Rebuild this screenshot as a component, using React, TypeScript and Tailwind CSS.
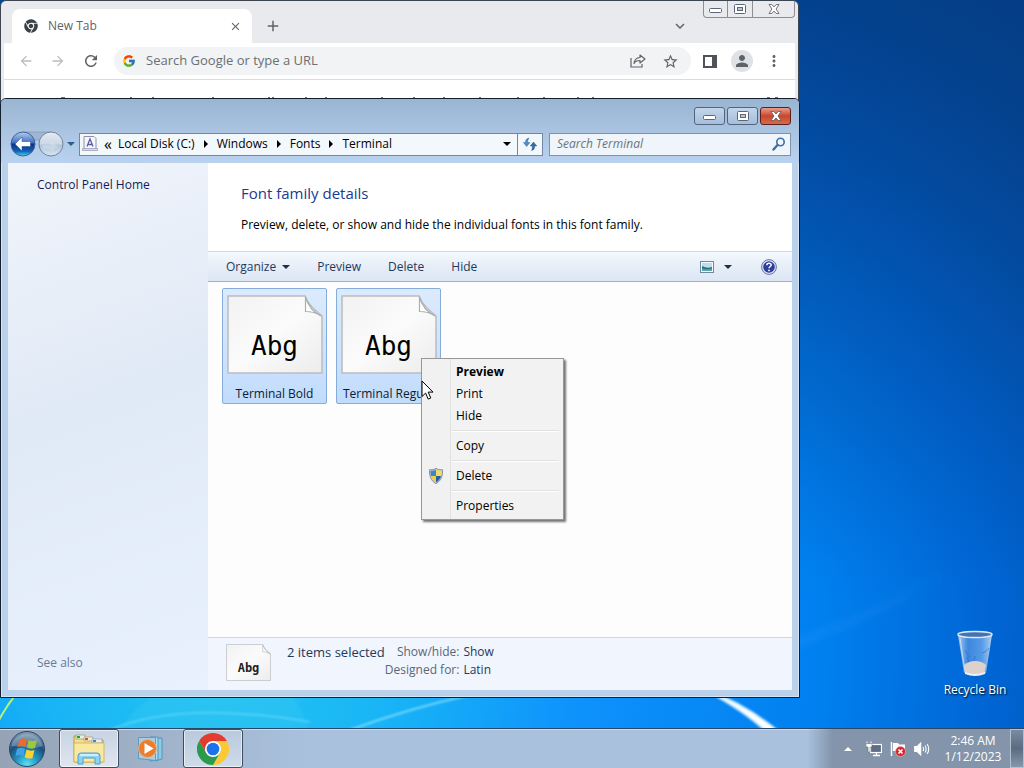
import type { ReactNode } from "react";
import { FaChrome } from "react-icons/fa";
import { FcGoogle } from "react-icons/fc";
import { MdAdd, MdArrowBack, MdArrowForward, MdClose, MdKeyboardArrowDown, MdMoreVert, MdPerson, MdRefresh, MdStarBorder } from "react-icons/md";

function MinimizeGlyph() {
  return (
    <svg width="13" height="6" viewBox="0 0 13 6">
      <rect x="0.5" y="0.5" width="12" height="4" rx="1" fill="#fff" stroke="#5c6678" />
    </svg>
  );
}

function MaximizeGlyph() {
  return (
    <svg width="12" height="10" viewBox="0 0 12 10">
      <rect x="0.5" y="0.5" width="11" height="9" rx="1" fill="#fff" stroke="#5c6678" />
      <rect x="3.5" y="3.5" width="5" height="3" fill="#b8c8dc" stroke="#5c6678" />
    </svg>
  );
}

function CloseGlyph() {
  return (
    <svg width="12" height="10" viewBox="0 0 13 11">
      <path d="M1 .5h3l2.500 2.700L9 .5h3L8.800 5.500 12 10.500H9L6.500 7.800 4 10.500H1l3.200-5z" fill="#fff" stroke="#5a5560" strokeWidth=".9" />
    </svg>
  );
}

function DownTriangle({ fill = "#1e2f45" }: { fill?: string }) {
  return (
    <svg width="8" height="4" viewBox="0 0 8 4">
      <path d="M0 0h8L4 4z" fill={fill} />
    </svg>
  );
}

function RightTriangle() {
  return (
    <svg width="4" height="8" viewBox="0 0 4 8">
      <path d="M0 0v8l4-4z" fill="#000" />
    </svg>
  );
}

function ShareIcon() {
  return (
    <svg width="16" height="14" viewBox="0 0 16 14" fill="none" stroke="#5f6368" strokeWidth="1.2">
      <path d="M1 4v9h11v-3" />
      <path d="M10 1l5 4-5 4V6.500C7 6.500 5 7.500 4 9.500c.3-3.500 2.500-5.700 6-6z" strokeLinejoin="round" />
    </svg>
  );
}

function NavArrows() {
  return (
    <svg width="56" height="28" viewBox="0 0 56 28">
      <defs>
        <linearGradient id="orb" x1="0" y1="0" x2="0" y2="1">
          <stop offset="0" stopColor="#b4cdf0" />
          <stop offset=".45" stopColor="#3e70c4" />
          <stop offset=".5" stopColor="#0c3187" />
          <stop offset=".8" stopColor="#0c64b8" />
          <stop offset="1" stopColor="#4fd3f5" />
        </linearGradient>
        <linearGradient id="dim" x1="0" y1="0" x2="0" y2="1">
          <stop offset="0" stopColor="#e4ebf3" />
          <stop offset=".5" stopColor="#ccd8e6" />
          <stop offset=".55" stopColor="#b1c4da" />
          <stop offset="1" stopColor="#d8e6f4" />
        </linearGradient>
      </defs>
      <path d="M14 2h28v8H14z" fill="#9db6d3" stroke="#8098b6" strokeWidth=".7" />
      <circle cx="14" cy="14" r="12" fill="url(#orb)" stroke="#44618c" />
      <circle cx="42" cy="14" r="12" fill="url(#dim)" stroke="#72849c" />
      <path d="M6 14l7-7v4.500h8.500v5H13V21z" fill="#fff" stroke="#21498c" strokeWidth=".5" />
      <path d="M34 15h8v-3l7 4.500-7 4v-2h-8z" fill="#e2eaf2" opacity=".4" />
    </svg>
  );
}

function FontFolderIcon() {
  return (
    <svg width="16" height="16" viewBox="0 0 16 16">
      <path d="M2 .5h10l2 2v11H2z" fill="#f6f6fb" stroke="#8d90a8" />
      <path d="M.5 12.500h15v2H.5z" fill="#d9dce8" stroke="#9497ae" strokeWidth=".7" />
      <path d="M5 10.500L8 3l3 7.500M6 8.500h4" fill="none" stroke="#5560a8" strokeWidth="1.300" />
    </svg>
  );
}

function RefreshIcon() {
  return (
    <svg width="14" height="14" viewBox="0 0 14 14">
      <path d="M6 1C3 1.500 2.500 3.500 2.500 5.500H.3L3.700 9.500 7 5.500H4.700C4.700 4 5 2.500 6 1z" fill="#4a90cc" stroke="#2c5f95" strokeWidth=".4" />
      <path d="M8.500 13.500c3-.5 3.200-2.500 3.200-4.500h2.100L10.500 5 7.200 9h2.100c0 1.700 0 3-.8 4.500z" fill="#2f6ea8" stroke="#244f7e" strokeWidth=".4" />
    </svg>
  );
}

function SearchIcon() {
  return (
    <svg width="14" height="14" viewBox="0 0 14 14" fill="none" stroke="#3b6fa5">
      <circle cx="8.500" cy="5" r="3.700" strokeWidth="1.600" />
      <path d="M5.500 8L1.500 12.500" strokeWidth="2.400" strokeLinecap="round" />
    </svg>
  );
}

function ViewIcon() {
  return (
    <svg width="14" height="12" viewBox="0 0 14 12">
      <rect x=".5" y=".5" width="13" height="11" fill="#f8fbfd" stroke="#6d8ba0" />
      <rect x="2" y="2" width="10" height="8" fill="#b9dff0" />
      <path d="M2 5q5 3 10 1v4H2z" fill="#2c6f7c" />
      <path d="M2 7.500q5 1.500 10 0V10H2z" fill="#5aa5a8" />
    </svg>
  );
}

function HelpIcon() {
  return (
    <svg width="16" height="16" viewBox="0 0 16 16">
      <circle cx="8" cy="8" r="7.400" fill="#dfe5f3" stroke="#6872a0" />
      <circle cx="8" cy="8" r="5.800" fill="#2b3f9e" />
      <path d="M5.800 6.300C5.800 4.800 6.800 4.200 8 4.200c1.300 0 2.200.7 2.200 1.800C10.200 7.500 8 7.500 8 9.300" fill="none" stroke="#fff" strokeWidth="1.500" />
      <circle cx="8" cy="11.400" r=".9" fill="#fff" />
    </svg>
  );
}

function ShieldIcon() {
  return (
    <svg width="16" height="16" viewBox="0 0 16 16">
      <defs>
        <clipPath id="shield">
          <path d="M8 1.500c2 1.300 3.800 1.400 5.500 1.300.2 5-1 9-5.500 11.700C3.500 11.800 2.300 7.800 2.500 2.800 4.200 2.900 6 2.800 8 1.500z" />
        </clipPath>
      </defs>
      <path d="M8 .3c2 1.400 4.300 1.600 6.500 1.400.4 6.300-1.300 11-6.500 14C2.800 12.700 1.100 8 1.500 1.700 3.700 1.900 6 1.700 8 .3z" fill="#c5ccd4" stroke="#77828e" strokeWidth=".8" />
      <g clipPath="url(#shield)">
        <path d="M0 0h8v8H0z" fill="#3d86cc" />
        <path d="M8 0h8v8H8z" fill="#f1dc5c" />
        <path d="M0 8h8v8H0z" fill="#ecd04c" />
        <path d="M8 8h8v8H8z" fill="#2460a8" />
      </g>
    </svg>
  );
}

function PageShape({ width, height }: { width: number; height: number }) {
  return (
    <svg width={width} height={height} viewBox="0 0 96 79" preserveAspectRatio="none" className="block">
      <defs>
        <linearGradient id="page" x1="0" y1="0" x2="1" y2="1">
          <stop offset="0" stopColor="#f2f2f2" />
          <stop offset=".5" stopColor="#fbfbfb" />
          <stop offset="1" stopColor="#ececec" />
        </linearGradient>
      </defs>
      <path d="M1 1h77q2 6 7 11t10 9v57H1z" fill="url(#page)" stroke="#b9bcc0" strokeWidth="1.500" />
      <path d="M78.500 2v14.500q9 0 15.500 4.500-12-6-15.500-19z" fill="#fff" stroke="#a9acb0" strokeWidth="1.200" />
    </svg>
  );
}

function ChromeLogo() {
  return (
    <svg width="32" height="32" viewBox="0 0 48 48">
      <circle cx="24" cy="24" r="12" fill="#fff" />
      <path d="M24 12h20.800a24 24 0 0 0-41.600 0L13.600 30A12 12 0 0 1 24 12z" fill="#e33b2e" />
      <path d="M34.400 30L24 48a24 24 0 0 0 20.800-36H24a12 12 0 0 1 10.400 18z" fill="#fcc934" />
      <path d="M13.600 30L3.200 12A24 24 0 0 0 24 48l10.400-18a12 12 0 0 1-20.800 0z" fill="#2c9a4b" />
      <circle cx="24" cy="24" r="9.500" fill="#1a73e8" />
    </svg>
  );
}

function StartOrb() {
  return (
    <svg width="38" height="38" viewBox="0 0 38 38">
      <defs>
        <radialGradient id="start" cx=".5" cy=".95" r=".95">
          <stop offset="0" stopColor="#5fe0f8" />
          <stop offset=".35" stopColor="#1f93bd" />
          <stop offset=".65" stopColor="#1c4f7c" />
          <stop offset="1" stopColor="#8aa4bd" />
        </radialGradient>
      </defs>
      <circle cx="19" cy="19" r="17.500" fill="url(#start)" stroke="#2b4662" />
      <path d="M3.500 16a16 16 0 0 1 31 0q-8 3-15 1.500T3.500 16z" fill="#fff" opacity=".25" />
      <path d="M11.500 9.500q4-2 7.500 0L17.500 17q-3.500-2-8 0z" fill="#ee6a2c" />
      <path d="M20.500 10q4 2 8.500.3L27 18q-4 1.500-8-.5z" fill="#9cc83c" />
      <path d="M9 18.700q4-2 8 0L15.500 26q-3.500-2-8 0z" fill="#3fa4e6" />
      <path d="M18.500 19.500q4 2 8 .5L24.500 28q-4 1.500-7.800-.8z" fill="#fbd02f" />
    </svg>
  );
}

function ExplorerIcon() {
  return (
    <svg width="34" height="32" viewBox="0 0 34 32">
      <path d="M2 3h9l2 2h6l2 2h10v22H2z" fill="#f5e08a" stroke="#b99b3f" />
      <path d="M4 2h9v4H4z" fill="#e8f1e1" stroke="#6c9c57" strokeWidth=".6" />
      <path d="M5 3h3v2H5z" fill="#3c9a36" />
      <path d="M12 4h9v4h-9z" fill="#f6ead8" stroke="#b48e5b" strokeWidth=".6" />
      <path d="M13 5h3v2h-3z" fill="#d8542e" />
      <path d="M20 6h10v4H20z" fill="#e5eef8" stroke="#7996b6" strokeWidth=".6" />
      <path d="M21 7h3v2h-3z" fill="#3d83d6" />
      <path d="M2 10h30v19H2z" fill="#f9e9a0" stroke="#d3b95c" />
      <path d="M6 31v-8q0-3 3-3h16q3 0 3 3v8h-5v-6H11v6z" fill="#8ed3f4" stroke="#4a9fd0" />
      <path d="M8 22h18" stroke="#e3f6fe" strokeWidth="1.500" />
    </svg>
  );
}

function PlayerIcon() {
  return (
    <svg width="28" height="26" viewBox="0 0 28 26">
      <path d="M18 2h7v21l-7 2z" fill="#8ecbe6" stroke="#4c96bb" />
      <path d="M13 1h8v23l-8 1z" fill="#b0dcee" stroke="#4c96bb" />
      <path d="M1.500 1.500h17v23l-17-2z" fill="#a9cde3" stroke="#5c9bbd" />
      <circle cx="10.500" cy="12.500" r="9" fill="#ee7d2b" stroke="#d9b79a" />
      <path d="M7.500 7v11l9-5.500z" fill="#fff" />
    </svg>
  );
}

function RecycleBinIcon() {
  return (
    <svg width="40" height="48" viewBox="0 0 40 48">
      <defs>
        <linearGradient id="bin" x1="0" y1="0" x2="1" y2="0">
          <stop offset="0" stopColor="#bcd7f2" stopOpacity=".9" />
          <stop offset=".3" stopColor="#4b8ee0" stopOpacity=".8" />
          <stop offset=".7" stopColor="#69a7ec" stopOpacity=".8" />
          <stop offset="1" stopColor="#c3dcf4" stopOpacity=".9" />
        </linearGradient>
      </defs>
      <path d="M3 5l6 38q11 5 22 0l6-38z" fill="url(#bin)" />
      <path d="M9 35q5-4 11-4 7 0 11 4l-1.500 8q-10 4-19 0z" fill="#ddd2cb" />
      <path d="M10 42q10 4 20 0v2q-10 4-20 0z" fill="#eef2f6" />
      <path d="M10 20l4 7M14 32l-2-5M27 23q5-1 7-5M20 26l-1 5" stroke="#235fb4" fill="none" opacity=".5" />
      <path d="M5 8l5 34" stroke="#e4f0fb" opacity=".7" />
      <ellipse cx="20" cy="4.500" rx="17" ry="3" fill="#4573ad" stroke="#dce9f5" strokeWidth="1.500" />
    </svg>
  );
}

function NetworkIcon() {
  return (
    <svg width="16" height="16" viewBox="0 0 16 16">
      <rect x="4.500" y="3.500" width="11" height="8" fill="#5e6e84" stroke="#fff" strokeWidth="1.200" />
      <path d="M7 14.500h7M10.500 12v2" stroke="#fff" strokeWidth="1.300" />
      <path d="M1 .5v3M5 .5v3" stroke="#fff" />
      <path d="M0 2.500h6V6H4v5H2V6H0z" fill="#fff" stroke="#4e5d72" strokeWidth=".5" />
    </svg>
  );
}

function FlagIcon() {
  return (
    <svg width="16" height="16" viewBox="0 0 16 16">
      <path d="M1.500 1v14" stroke="#fff" strokeWidth="1.500" />
      <path d="M3 2h5l1 1.500h6V10H3z" fill="#fff" />
      <circle cx="10.500" cy="10.500" r="5" fill="#d8262c" stroke="#f0b5b5" strokeWidth=".6" />
      <path d="M8.500 8.500l4 4m0-4l-4 4" stroke="#fff" strokeWidth="1.600" />
    </svg>
  );
}

function SpeakerIcon() {
  return (
    <svg width="16" height="16" viewBox="0 0 16 16" fill="none" stroke="#fff" strokeWidth="1.100">
      <path d="M.7 5.500h2.500l3.500-3.500v12l-3.500-3.500H.7z" fill="#fff" />
      <path d="M9 6q1.200 2 0 4M11 4.500q2.200 3.500 0 7M13.200 3q3 5 0 10" />
    </svg>
  );
}

function Cursor() {
  return (
    <svg width="14" height="21" viewBox="0 0 14 21">
      <path d="M1 1v15.500l3.600-3.400 2.600 6 2.600-1.100-2.600-5.900H12z" fill="#fff" stroke="#000" strokeLinejoin="round" />
    </svg>
  );
}

const crumbs = ["Local Disk (C:)", "Windows", "Fonts", "Terminal"];

function ChromeWindow() {
  return (
    <section className="absolute top-0 right-[225px] left-0 h-[110px] overflow-hidden rounded-t-md border border-[#3d4650] bg-[#e8eaed] pr-[3px] pl-[3px] text-[#5f6368]">
      <div className="flex h-[42px] pl-2">
        <div className="mt-2 flex w-60 items-center rounded-t-lg bg-white pr-2.5 pl-3 text-[12px]">
          <FaChrome size={14} color="#3c4043" />
          <span className="ml-2.5 flex-1">New Tab</span>
          <button aria-label="Close tab">
            <MdClose size={13} />
          </button>
        </div>
        <button aria-label="New tab" className="mt-2 ml-3">
          <MdAdd size={18} />
        </button>
        <button aria-label="Search tabs" className="mt-2 mr-3.5 ml-auto">
          <MdKeyboardArrowDown size={18} />
        </button>
        <div className="flex h-[17px] self-start rounded-b border border-t-0 border-[#8b8f95]">
          <button aria-label="Minimize" className="flex w-6 items-end justify-center border-r border-[#8b8f95] pb-[3px]"><MinimizeGlyph /></button>
          <button aria-label="Maximize" className="flex w-[25px] items-center justify-center border-r border-[#8b8f95]"><MaximizeGlyph /></button>
          <button aria-label="Close" className="flex w-[41px] items-center justify-center"><CloseGlyph /></button>
        </div>
      </div>
      <div className="flex h-[37px] items-center border-b border-[#dadce0] bg-white pr-3 pl-3.5">
        <div className="flex w-[104px] shrink-0 items-center gap-4">
          <button aria-label="Back"><MdArrowBack size={16} color="#babcbe" /></button>
          <button aria-label="Forward"><MdArrowForward size={16} color="#babcbe" /></button>
          <button aria-label="Reload"><MdRefresh size={18} /></button>
        </div>
        <div className="-ml-2 flex h-7 flex-1 items-center rounded-full bg-[#f1f3f4] pr-3 pl-2">
          <FcGoogle size={14} />
          <input aria-label="Address" placeholder="Search Google or type a URL" className="ml-2.5 min-w-0 flex-1 bg-transparent text-[13px] outline-none placeholder:text-[#6b6f73]" />
          <button aria-label="Share" className="mr-4"><ShareIcon /></button>
          <button aria-label="Bookmark"><MdStarBorder size={17} /></button>
        </div>
        <button aria-label="Side panel" className="ml-3">
          <svg width="14" height="13" viewBox="0 0 14 13"><path d="M1 1h12v11H1z" fill="#fff" stroke="#4f5357" strokeWidth="2" /><path d="M9 1h4v11H9z" fill="#4f5357" /></svg>
        </button>
        <button aria-label="Profile" className="ml-3.5 flex size-[22px] items-center justify-center rounded-full bg-[#dee1e6]"><MdPerson size={18} /></button>
        <button aria-label="Menu" className="ml-3"><MdMoreVert size={18} /></button>
      </div>
      <div className="h-[30px] bg-white pt-4">
        <svg width="780" height="2" viewBox="0 0 780 2" className="block">
          <path d="M57 1.500h4M126 1.500h2M148 1.500h2M208 1.500h2M264 1.500h2M268 1.500h2M301 1.500h2M321 1.500h2M377 1.500h2M409 1.500h2M439 1.500h2M475 1.500h2M513 1.500h2M539 1.500h2M573 1.500h2M588 1.500h2M763 1.500h3M771 1.500h3" stroke="#6b6f73" />
        </svg>
      </div>
    </section>
  );
}

function FontTile({ name }: { name: string }) {
  return (
    <button className="flex h-[116px] w-[105px] flex-col items-center rounded-[2px] border border-[#84acdd] bg-linear-to-b from-[#dcebfc] to-[#c1dcfc] pt-1.5">
      <span className="relative">
        <PageShape width={96} height={79} />
        <span className="absolute inset-x-0 top-[35px] text-center font-['DejaVu_Sans_Mono'] text-[26px] leading-8 text-black">Abg</span>
      </span>
      <span className="mt-3 w-full overflow-hidden px-1.5 text-center whitespace-nowrap leading-4 text-[#0c1a33]">{name}</span>
    </button>
  );
}

function CommandButton({ children }: { children: ReactNode }) {
  return <button className="flex items-center gap-1.5 text-[#1e395b]">{children}</button>;
}

function ExplorerWindow() {
  return (
    <section className="absolute top-[98px] right-[224px] bottom-[30px] left-0 flex flex-col overflow-hidden rounded-t-md border border-[#14202e] bg-[#b9d1ea] px-[7px] pb-[7px] ring-1 ring-white/40 ring-inset">
      <header className="-mx-[7px] bg-linear-to-b from-[#99b5d1] to-[#bad2f0] px-2 pb-[5px]">
        <div className="flex justify-end gap-0.5 pt-2">
          <button aria-label="Minimize" className="flex h-[18px] w-[31px] items-center justify-center rounded-[3px] border border-[#52647e] bg-linear-to-b from-[#c3d5ea] to-[#a5bedb] pt-1"><MinimizeGlyph /></button>
          <button aria-label="Maximize" className="flex h-[18px] w-[31px] items-center justify-center rounded-[3px] border border-[#52647e] bg-linear-to-b from-[#c3d5ea] to-[#a5bedb]"><MaximizeGlyph /></button>
          <button aria-label="Close" className="flex h-[18px] w-[31px] items-center justify-center rounded-[3px] border border-[#5d1f1b] bg-linear-to-b from-[#e79c8a] via-[#c8452b] to-[#d56a4d]"><CloseGlyph /></button>
        </div>
        <div className="mt-[5px] flex items-center">
          <button aria-label="Back and forward"><NavArrows /></button>
          <button aria-label="Recent pages" className="ml-0.5"><DownTriangle fill="#27608c" /></button>
          <div className="ml-1 flex h-[23px] min-w-0 flex-1 items-center border border-[#7287a3] bg-[#f3f8fd] pl-0.5">
            <FontFolderIcon />
            <span className="mx-1.5 text-[16px] leading-4 text-black">«</span>
            {crumbs.map((crumb, i) => (
              <span key={crumb} className="flex items-center text-black">
                {i > 0 && <span className="mx-[9px]"><RightTriangle /></span>}
                <button className="whitespace-nowrap">{crumb}</button>
              </span>
            ))}
            <button aria-label="Previous locations" className="mr-1.5 ml-auto"><DownTriangle fill="#000" /></button>
            <button aria-label="Refresh" className="flex h-full w-[25px] items-center justify-center border-l border-[#7287a3]"><RefreshIcon /></button>
          </div>
          <div className="ml-1.5 flex h-[23px] w-[242px] items-center border border-[#7c92ad] bg-[#eff5fb] pr-1 pl-[7px]">
            <input aria-label="Search Terminal" placeholder="Search Terminal" className="min-w-0 flex-1 bg-transparent italic outline-none placeholder:text-[#6b747e]" />
            <button aria-label="Search"><SearchIcon /></button>
          </div>
        </div>
      </header>
      <div className="flex min-h-0 flex-1">
        <aside className="flex w-[200px] shrink-0 flex-col justify-between bg-linear-160 from-[#f1f5fb] via-[#e0e9f6] via-45% to-[#e8f1fd] px-[29px] pt-3.5 pb-[19px]">
          <a href="#home" className="leading-4 text-[#151c55]">Control Panel Home</a>
          <span className="leading-4 text-[#6a7a94]">See also</span>
        </aside>
        <main className="flex min-w-0 flex-1 flex-col bg-[#fdfdfd]">
          <div className="h-[88px] bg-white px-[33px] pt-5">
            <h1 className="text-[15px] leading-5 text-[#1b3a8f]">Font family details</h1>
            <p className="mt-3.5 leading-4 text-black">Preview, delete, or show and hide the individual fonts in this font family.</p>
          </div>
          <div className="flex h-[31px] items-center gap-[27px] border-t border-b border-t-[#cfdbea] border-b-[#a4b2c8] bg-linear-to-b from-[#f5f9fe] via-[#e7eef8] via-50% to-[#dce6f4] pr-[15px] pl-[18px]">
            <CommandButton>Organize <DownTriangle /></CommandButton>
            <CommandButton>Preview</CommandButton>
            <CommandButton>Delete</CommandButton>
            <CommandButton>Hide</CommandButton>
            <div className="ml-auto flex items-center">
              <button aria-label="Change your view"><ViewIcon /></button>
              <button aria-label="More options" className="ml-2.5"><DownTriangle /></button>
              <button aria-label="Help" className="ml-[29px]"><HelpIcon /></button>
            </div>
          </div>
          <div className="flex flex-1 gap-[9px] px-3.5 pt-1.5">
            <FontTile name="Terminal Bold" />
            <FontTile name="Terminal Regular" />
          </div>
          <footer className="flex h-[53px] border-t border-[#ced6e2] bg-[#f1f5fd] pt-1.5 pl-[18px]">
            <span className="relative h-[38px]">
              <PageShape width={45} height={37} />
              <span className="absolute inset-x-0 top-4 text-center font-['DejaVu_Sans_Mono'] text-[12px] leading-4 font-bold text-[#222]">Abg</span>
            </span>
            <span className="ml-4 text-[13px] leading-4 text-[#1e395b]">2 items selected</span>
            <dl className="grid grid-cols-[auto_auto] content-start gap-x-1 gap-y-0.5 leading-4">
              <dt className="text-right text-[#5a6779]">Show/hide:</dt>
              <dd className="text-[#1e395b]">Show</dd>
              <dt className="text-right text-[#5a6779]">Designed for:</dt>
              <dd className="text-[#1e395b]">Latin</dd>
            </dl>
          </footer>
        </main>
      </div>
    </section>
  );
}

function MenuItem({ children, icon, bold }: { children: ReactNode; icon?: ReactNode; bold?: boolean }) {
  return (
    <button role="menuitem" className={bold ? "flex h-[22px] w-full items-center font-bold" : "flex h-[22px] w-full items-center"}>
      <span className="mr-2 flex w-6 justify-center">{icon}</span>
      {children}
    </button>
  );
}

function MenuLine() {
  return <hr className="my-[3px] mr-0.5 ml-7 h-0.5 border-t border-b border-t-[#e0e0e0] border-b-white" />;
}

function ContextMenu() {
  return (
    <div role="menu" className="absolute top-[358px] left-[421px] w-[143px] border border-[#979797] bg-[#f1f1f1] bg-[linear-gradient(to_right,#f1f1f1_28px,#e2e2e2_28px,#e2e2e2_29px,#f2f2f2_29px)] p-0.5 text-black shadow-[2px_2px_2px_rgba(0,0,0,0.55)]">
      <MenuItem bold>Preview</MenuItem>
      <MenuItem>Print</MenuItem>
      <MenuItem>Hide</MenuItem>
      <MenuLine />
      <MenuItem>Copy</MenuItem>
      <MenuLine />
      <MenuItem icon={<ShieldIcon />}>Delete</MenuItem>
      <MenuLine />
      <MenuItem>Properties</MenuItem>
    </div>
  );
}

function Wallpaper() {
  return (
    <svg className="absolute inset-0 size-full" viewBox="0 0 1024 728" preserveAspectRatio="none">
      <defs>
        <filter id="soft"><feGaussianBlur stdDeviation="1.200" /></filter>
        <filter id="haze"><feGaussianBlur stdDeviation="4" /></filter>
        <linearGradient id="streak" x1="0" y1="0" x2="1" y2="0">
          <stop offset="0" stopColor="#2f9cf8" stopOpacity=".4" />
          <stop offset="1" stopColor="#2f9cf8" stopOpacity="0" />
        </linearGradient>
      </defs>
      <path d="M780 645Q870 615 940 570L944 580Q870 622 780 652z" fill="url(#streak)" filter="url(#haze)" />
      <path d="M-2 722Q6 706 18 692" stroke="#b4f07c" strokeWidth="2" fill="none" />
      <path d="M110 730Q180 700 310 722" stroke="#7fe0fb" strokeWidth="2" opacity=".5" fill="none" filter="url(#soft)" />
      <path d="M350 730Q410 708 470 695" stroke="#9ee6ff" strokeWidth="2" opacity=".7" fill="none" filter="url(#soft)" />
      <path d="M120 730Q135 705 160 692L290 692Q303 710 308 730z" fill="#5cd8f8" opacity=".15" filter="url(#soft)" />
      <path d="M706 690Q745 704 779 732L767 732Q745 711 706 690z" fill="#fff" stroke="#dff4ff" strokeWidth="2" filter="url(#soft)" />
    </svg>
  );
}

function Taskbar() {
  return (
    <footer className="relative flex h-10 items-stretch border-t border-[#274868] bg-linear-to-r from-[#96a3b5] via-[#a9c1dd] via-30% to-[#a9c1dd] to-78% text-white shadow-[inset_0_1px_0_#c8dcf0]">
      <button aria-label="Start" className="flex w-[54px] items-center justify-center"><StartOrb /></button>
      <button aria-label="Windows Explorer" className="ml-[5px] flex w-[60px] items-center justify-center rounded-[3px] border border-[#3d4c60] bg-linear-to-b from-[#c7d3e2] to-[#dfe6ef] ring-1 ring-white/60 ring-inset"><ExplorerIcon /></button>
      <button aria-label="Media Player" className="mx-0.5 flex w-[60px] items-center justify-center"><PlayerIcon /></button>
      <button aria-label="Google Chrome" className="flex w-[60px] items-center justify-center rounded-[3px] border border-[#3d4c60] bg-linear-to-b from-[#b9c9dd] to-[#cfdbe9] ring-1 ring-white/60 ring-inset"><ChromeLogo /></button>
      <div className="ml-auto flex items-center bg-linear-to-r from-transparent to-[#8394ab] to-12% pl-[37px]">
        <button aria-label="Show hidden icons">
          <svg width="8" height="4" viewBox="0 0 8 4" className="mr-3.5"><path d="M0 4h8L4 0z" fill="#fff" /></svg>
        </button>
        <div className="flex gap-2">
          <NetworkIcon />
          <FlagIcon />
          <SpeakerIcon />
        </div>
        <button className="mr-1.5 ml-3 w-[62px] text-center leading-4">
          <span className="block">2:46 AM</span>
          <span className="block">1/12/2023</span>
        </button>
        <button aria-label="Show desktop" className="h-full w-3.5 border border-[#b3c0d0] bg-linear-to-b from-[#7b8ca2] via-[#5a6b82] to-[#8796ab]" />
      </div>
    </footer>
  );
}

export default function App() {
  return (
    <div className="flex h-screen min-h-[600px] flex-col overflow-hidden bg-[radial-gradient(circle_at_220px_650px,#25c6f0_0,#18b4f6_180px,#0e92fc_360px,#0080f0_600px,#0064d2_780px,#0450a8_940px,#053f85_1100px)] font-['Open_Sans',sans-serif] text-[12px]">
      <div className="relative flex-1">
        <Wallpaper />
        <div className="absolute inset-0 bg-linear-to-b from-[#043a80]/75 to-transparent to-80%" />
        <button className="absolute right-[11px] bottom-[30px] flex w-[76px] flex-col items-center text-white [text-shadow:1px_1px_2px_#000]">
          <RecycleBinIcon />
          <span className="mt-1 whitespace-nowrap leading-4">Recycle Bin</span>
        </button>
        <ChromeWindow />
        <ExplorerWindow />
        <ContextMenu />
        <span className="pointer-events-none absolute top-[380px] left-[421px]"><Cursor /></span>
      </div>
      <Taskbar />
    </div>
  );
}
